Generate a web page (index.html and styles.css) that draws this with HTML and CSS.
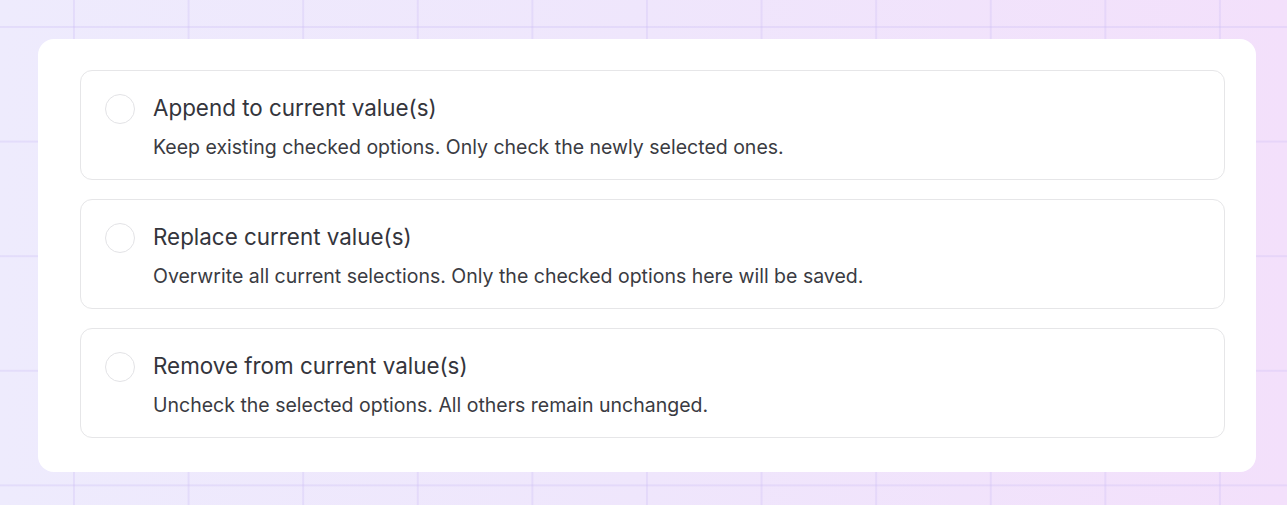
FILE: index.html
```html
<!DOCTYPE html>
<html lang="en">
<head>
<meta charset="utf-8">
<title>Options</title>
<link rel="stylesheet" href="styles.css">
</head>
<body>
<div class="stage">
  <div class="card">
    <label class="option">
      <span class="radio"></span>
      <span class="text">
        <span class="title">Append to current value(s)</span>
        <span class="desc">Keep existing checked options. Only check the newly selected ones.</span>
      </span>
    </label>
    <label class="option">
      <span class="radio"></span>
      <span class="text">
        <span class="title">Replace current value(s)</span>
        <span class="desc">Overwrite all current selections. Only the checked options here will be saved.</span>
      </span>
    </label>
    <label class="option">
      <span class="radio"></span>
      <span class="text">
        <span class="title">Remove from current value(s)</span>
        <span class="desc">Uncheck the selected options. All others remain unchanged.</span>
      </span>
    </label>
  </div>
</div>
</body>
</html>
```
FILE: styles.css
```css
html, body {
  margin: 0;
  padding: 0;
}
body {
  width: 1287px;
  height: 505px;
  overflow: hidden;
  font-family: Inter, "Noto Sans", sans-serif;
}
.stage {
  width: 1287px;
  height: 505px;
  box-sizing: border-box;
  padding: 39px 0 0 38px;
  background-color: #efe8fd;
  background-image:
    linear-gradient(to right, rgba(205, 190, 245, 0.32) 2px, transparent 2px),
    linear-gradient(to bottom, rgba(205, 190, 245, 0.32) 2px, transparent 2px),
    linear-gradient(to right, #eeebfd 0%, #efe6fc 50%, #f3e0fb 100%);
  background-size: 114.6px 114.6px, 114.6px 114.6px, 100% 100%;
  background-position: 73px 26px, 73px 26px, 0 0;
}
.card {
  width: 1218px;
  height: 433px;
  box-sizing: border-box;
  background: #ffffff;
  border-radius: 16px;
  padding: 31px 31px 0 42px;
  display: flex;
  flex-direction: column;
  gap: 19px;
}
.option {
  height: 110px;
  box-sizing: border-box;
  border: 1.5px solid #e6e6e8;
  border-radius: 12px;
  padding: 22px 24px 0 24px;
  display: flex;
  align-items: flex-start;
  gap: 18px;
}
.radio {
  width: 30px;
  height: 30px;
  box-sizing: border-box;
  border: 1.5px solid #e3e3e6;
  border-radius: 50%;
  flex: none;
  margin-top: 1px;
}
.text {
  display: flex;
  flex-direction: column;
}
.title {
  font-size: 22.4px;
  line-height: 30px;
  color: #34353c;
  font-weight: 400;
}
.desc {
  margin-top: 13px;
  font-size: 19.5px;
  line-height: 22px;
  color: #3a3b42;
}
```
